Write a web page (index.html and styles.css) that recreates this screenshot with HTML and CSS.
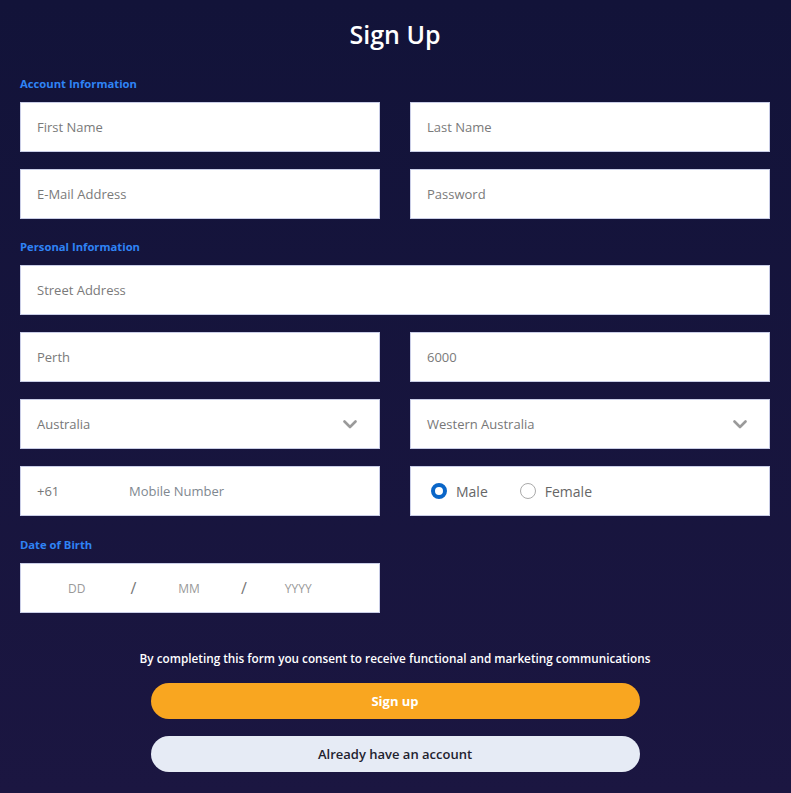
FILE: index.html
```html
<!DOCTYPE html>
<html lang="en">
<head>
  <meta charset="UTF-8">
  <meta name="viewport" content="width=device-width, initial-scale=1.0">
  <title>Sign Up</title>
  <link rel="stylesheet" href="styles.css">
</head>
<body>
  <form class="signup">
    <h1 class="title">Sign Up</h1>

    <h2 class="section-label first">Account Information</h2>
    <div class="row">
      <input class="field" type="text" placeholder="First Name">
      <input class="field" type="text" placeholder="Last Name">
    </div>
    <div class="row">
      <input class="field" type="email" placeholder="E-Mail Address">
      <input class="field" type="password" placeholder="Password">
    </div>

    <h2 class="section-label">Personal Information</h2>
    <div class="row single">
      <input class="field" type="text" placeholder="Street Address">
    </div>
    <div class="row">
      <input class="field" type="text" placeholder="Perth">
      <input class="field" type="text" placeholder="6000">
    </div>
    <div class="row">
      <div class="field select">
        <span>Australia</span>
        <svg class="chevron" width="14" height="9" viewBox="0 0 14 9"><polyline points="1.5,1.5 7,7 12.5,1.5" fill="none" stroke="#9a9a9a" stroke-width="2.6" stroke-linecap="round" stroke-linejoin="round"/></svg>
      </div>
      <div class="field select">
        <span>Western Australia</span>
        <svg class="chevron" width="14" height="9" viewBox="0 0 14 9"><polyline points="1.5,1.5 7,7 12.5,1.5" fill="none" stroke="#9a9a9a" stroke-width="2.6" stroke-linecap="round" stroke-linejoin="round"/></svg>
      </div>
    </div>
    <div class="row">
      <div class="field phone">
        <span class="prefix">+61</span>
        <span class="ph">Mobile Number</span>
      </div>
      <div class="field gender">
        <label class="radio"><span class="dot checked"></span>Male</label>
        <label class="radio"><span class="dot"></span>Female</label>
      </div>
    </div>

    <h2 class="section-label dob-label">Date of Birth</h2>
    <div class="row last">
      <div class="field dob">
        <span class="dd">DD</span>
        <span class="slash s1">/</span>
        <span class="mm">MM</span>
        <span class="slash s2">/</span>
        <span class="yy">YYYY</span>
      </div>
    </div>

    <p class="consent">By completing this form you consent to receive functional and marketing communications</p>
    <button type="button" class="btn primary">Sign up</button>
    <button type="button" class="btn secondary">Already have an account</button>
  </form>
</body>
</html>
```

FILE: styles.css
```css
body {
  margin: 0;
  font-family: "Open Sans", "Noto Sans", sans-serif;
  background: linear-gradient(180deg, #121339 0%, #1b1641 100%);
  min-height: 793px;
}

.signup {
  padding: 0 21px 0 20px;
}

.title {
  margin: 0;
  padding-top: 17px;
  line-height: 34px;
  font-size: 25px;
  font-weight: 600;
  color: #fff;
  text-align: center;
}

.section-label {
  margin: 22px 0 12px;
  font-size: 11.25px;
  line-height: 12px;
  font-weight: 700;
  color: #2f83f5;
}

.section-label.first {
  margin-top: 27px;
}

.section-label.dob-label {
  margin-top: 23px;
}

.row {
  display: grid;
  grid-template-columns: 1fr 1fr;
  column-gap: 30px;
  margin-bottom: 17px;
}

.row.last {
  margin-bottom: 0;
}

.row.single {
  grid-template-columns: 1fr;
}

.field {
  box-sizing: border-box;
  height: 50px;
  margin: 0;
  padding: 0 16px;
  border: 1px solid #c9cde6;
  border-radius: 0;
  background: #fff;
  font-family: inherit;
  font-size: 13px;
  color: #777;
  outline: none;
  display: flex;
  align-items: center;
}

.field::placeholder {
  color: #7a7a7a;
}

.select {
  justify-content: space-between;
  padding-right: 22px;
}

.phone .prefix {
  width: 92px;
}

.phone .ph {
  color: #808890;
}

.gender {
  padding-left: 20px;
  gap: 32px;
  font-size: 14px;
  color: #666;
}

.radio {
  display: flex;
  align-items: center;
  gap: 9px;
}

.dot {
  box-sizing: border-box;
  width: 16px;
  height: 16px;
  border-radius: 50%;
  border: 1px solid #aaa;
  background: #fff;
}

.dot.checked {
  border: 4px solid #0a66c8;
}

.dob {
  padding-left: 47px;
  font-size: 12px;
  color: #999;
}

.dob .slash {
  font-size: 16px;
  color: #777;
}

.dob .dd { margin-right: 45px; }
.dob .s1 { margin-right: 42px; }
.dob .mm { margin-right: 41px; }
.dob .s2 { margin-right: 38px; }

.consent {
  margin: 38px 0 0;
  font-size: 11.75px;
  line-height: 14px;
  font-weight: 600;
  color: #fff;
  text-align: center;
}

.btn {
  display: block;
  width: 489px;
  height: 36px;
  margin: 17px auto 0;
  border: none;
  border-radius: 18px;
  font-family: inherit;
  font-size: 13px;
  cursor: pointer;
}

.btn.primary {
  margin-top: 18px;
  background: #f9a620;
  color: #fff;
  font-weight: 700;
}

.btn.secondary {
  background: #e6ebf5;
  color: #22222e;
  font-weight: 600;
}
```
